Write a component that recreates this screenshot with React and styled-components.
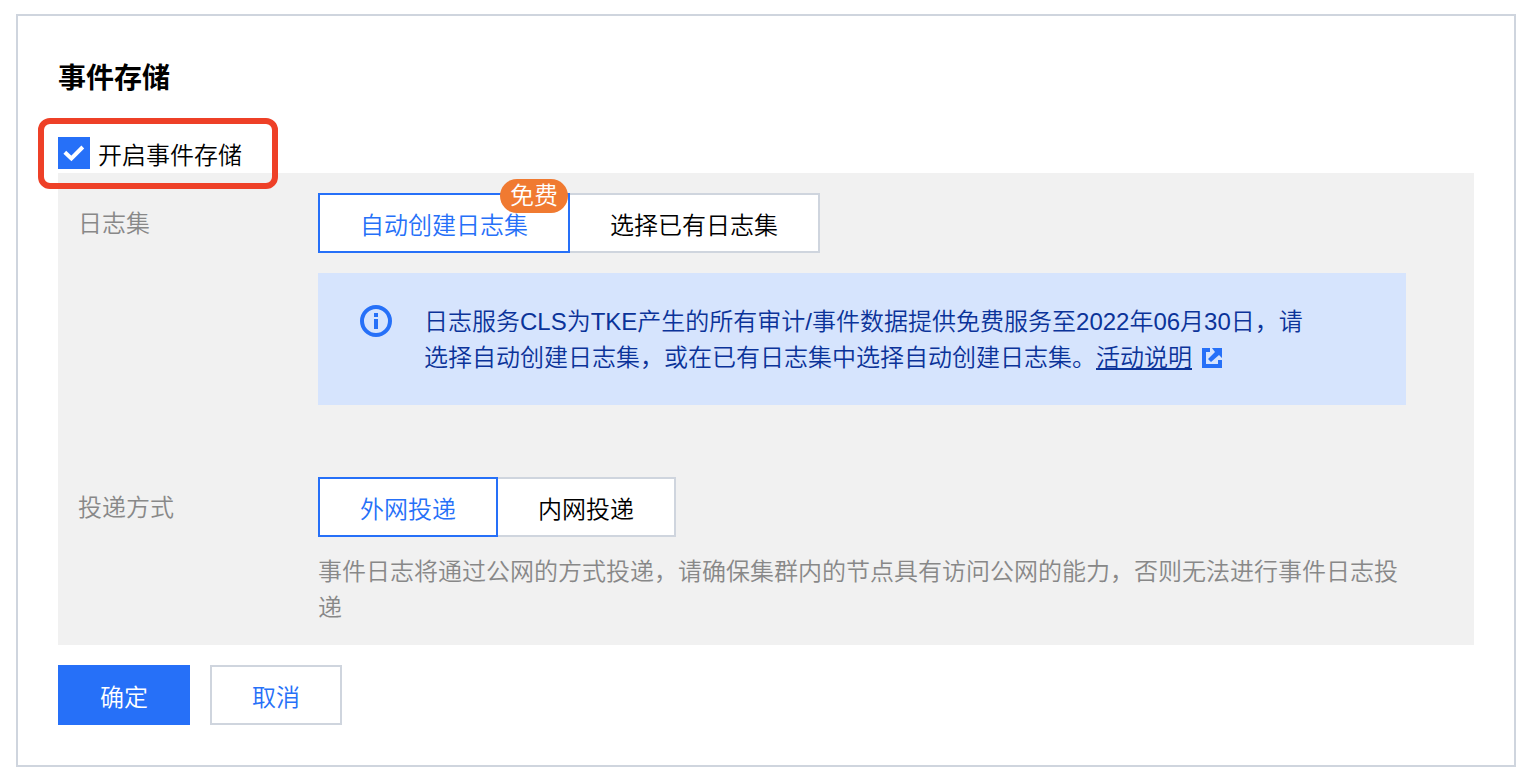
import React, { useState } from "react";
import styled, { createGlobalStyle, css } from "styled-components";

const GlobalStyle = createGlobalStyle`
  *, *::before, *::after { box-sizing: border-box; }
  body {
    margin: 0;
    background: #fff;
    color: #000;
    font: 350 24px/36px "Liberation Sans", "Noto Sans CJK SC", sans-serif;
  }
  button, input { font: inherit; }
`;

const Card = styled.main`
  margin: 14px 16px;
  padding: 42px 40px 40px;
  border: 2px solid #cfd5de;
`;

const Title = styled.h1`
  margin: 0 0 37px;
  font-size: 28px;
  line-height: 42px;
  font-weight: 700;
`;

const Enable = styled.label`
  position: relative;
  display: flex;
  align-items: flex-start;
  gap: 8px;
  width: fit-content;
  height: 36px;
  line-height: 38px;
  cursor: pointer;

  &::after {
    content: "";
    position: absolute;
    inset: -19px -36px -16px -20px;
    border: 6px solid #ee4027;
    border-radius: 12px;
    pointer-events: none;
  }
`;

const CheckWrap = styled.span`
  display: grid;
  flex: none;
  width: 32px;
  height: 32px;

  > * { grid-area: 1 / 1; }
  svg { pointer-events: none; }
`;

const Checkbox = styled.input`
  appearance: none;
  width: 32px;
  height: 32px;
  margin: 0;
  border: 2px solid #cfd5de;
  background: #fff;

  &:checked { border-color: #2670f8; background: #2670f8; }
`;

const Panel = styled.section`
  display: flex;
  flex-direction: column;
  gap: 72px;
  padding: 20px 68px 19px 20px;
  background: #f1f1f1;
`;

const Field = styled.div`
  display: grid;
  grid-template-columns: 240px minmax(0, 1fr);
`;

const FieldLabel = styled.div`
  padding-top: 13px;
  color: #888;
`;

const Segments = styled.div`
  display: flex;
`;

const Segment = styled.button`
  position: relative;
  height: 60px;
  padding: 6px 40px 0;
  border: 2px solid #cfd5de;
  background: #fff;
  color: #000;
  cursor: pointer;

  & + & { margin-left: -2px; }

  ${(p) => p.$active && css`
    z-index: 1;
    border-color: #2670f8;
    color: #2670f8;
  `}
`;

const Badge = styled.span`
  position: absolute;
  top: -16px;
  right: 0;
  height: 34px;
  padding: 0 10px;
  border-radius: 17px;
  background: #f07a31;
  color: #fff;
  line-height: 34px;
`;

const Notice = styled.div`
  display: flex;
  gap: 32px;
  margin-top: 20px;
  padding: 31px 84px 29px 42px;
  background: #d6e4fd;
  color: #0b3399;

  p { margin: 0; }
`;

const InfoIcon = styled.svg`
  flex: none;
  margin-top: 1px;
`;

const NoticeLink = styled.a`
  color: inherit;
  text-decoration: underline;
  text-decoration-thickness: 2px;
  text-underline-offset: 2px;
`;

const ExternalIcon = styled.svg`
  margin-left: 10px;
  vertical-align: -2px;
`;

const Help = styled.p`
  margin: 17px 0 0;
  color: #888;
`;

const Actions = styled.div`
  display: flex;
  gap: 20px;
  margin-top: 20px;
`;

const Action = styled.button`
  height: 60px;
  padding: 6px 40px 0;
  border: 2px solid ${(p) => (p.$primary ? "#2670f8" : "#cfd5de")};
  background: ${(p) => (p.$primary ? "#2670f8" : "#fff")};
  color: ${(p) => (p.$primary ? "#fff" : "#2670f8")};
  cursor: pointer;
`;

function SegmentGroup({ labelId, options }) {
  const [selected, setSelected] = useState(0);
  return (
    <Segments role="group" aria-labelledby={labelId}>
      {options.map((option, i) => (
        <Segment
          key={option.text}
          type="button"
          $active={i === selected}
          aria-pressed={i === selected}
          onClick={() => setSelected(i)}
        >
          {option.text}
          {option.badge && <Badge>{option.badge}</Badge>}
        </Segment>
      ))}
    </Segments>
  );
}

export default function App() {
  const [enabled, setEnabled] = useState(true);
  return (
    <>
      <GlobalStyle />
      <Card>
        <Title>事件存储</Title>
        <Enable htmlFor="enable-storage">
          <CheckWrap>
            <Checkbox
              id="enable-storage"
              type="checkbox"
              checked={enabled}
              onChange={(e) => setEnabled(e.target.checked)}
            />
            {enabled && (
              <svg width="32" height="32" viewBox="0 0 32 32" aria-hidden="true">
                <path d="M6.8 15.2 13.4 21.4 24.8 10" fill="none" stroke="#fff" strokeWidth="4" />
              </svg>
            )}
          </CheckWrap>
          开启事件存储
        </Enable>
        <Panel>
          <Field>
            <FieldLabel id="log-set">日志集</FieldLabel>
            <div>
              <SegmentGroup
                labelId="log-set"
                options={[{ text: "自动创建日志集", badge: "免费" }, { text: "选择已有日志集" }]}
              />
              <Notice>
                <InfoIcon width="32" height="32" viewBox="0 0 32 32" aria-hidden="true">
                  <circle cx="16" cy="16" r="14" fill="none" stroke="#2670f8" strokeWidth="4" />
                  <path d="M14 8h4v4h-4zM14 14h4v10h-4z" fill="#2670f8" />
                </InfoIcon>
                <p>
                  日志服务CLS为TKE产生的所有审计/事件数据提供免费服务至2022年06月30日，请选择自动创建日志集，或在已有日志集中选择自动创建日志集。
                  <NoticeLink href="#activity">活动说明</NoticeLink>
                  <ExternalIcon width="20" height="20" viewBox="0 0 20 20" aria-hidden="true">
                    <path
                      d="M0 0H8V4H4V16H16V12H20V20H0ZM10 0H20V10L17 7L9 14L6 11L13 4Z"
                      fill="#2670f8"
                    />
                  </ExternalIcon>
                </p>
              </Notice>
            </div>
          </Field>
          <Field>
            <FieldLabel id="delivery">投递方式</FieldLabel>
            <div>
              <SegmentGroup
                labelId="delivery"
                options={[{ text: "外网投递" }, { text: "内网投递" }]}
              />
              <Help>
                事件日志将通过公网的方式投递，请确保集群内的节点具有访问公网的能力，否则无法进行事件日志投递
              </Help>
            </div>
          </Field>
        </Panel>
        <Actions>
          <Action type="button" $primary>确定</Action>
          <Action type="button">取消</Action>
        </Actions>
      </Card>
    </>
  );
}
